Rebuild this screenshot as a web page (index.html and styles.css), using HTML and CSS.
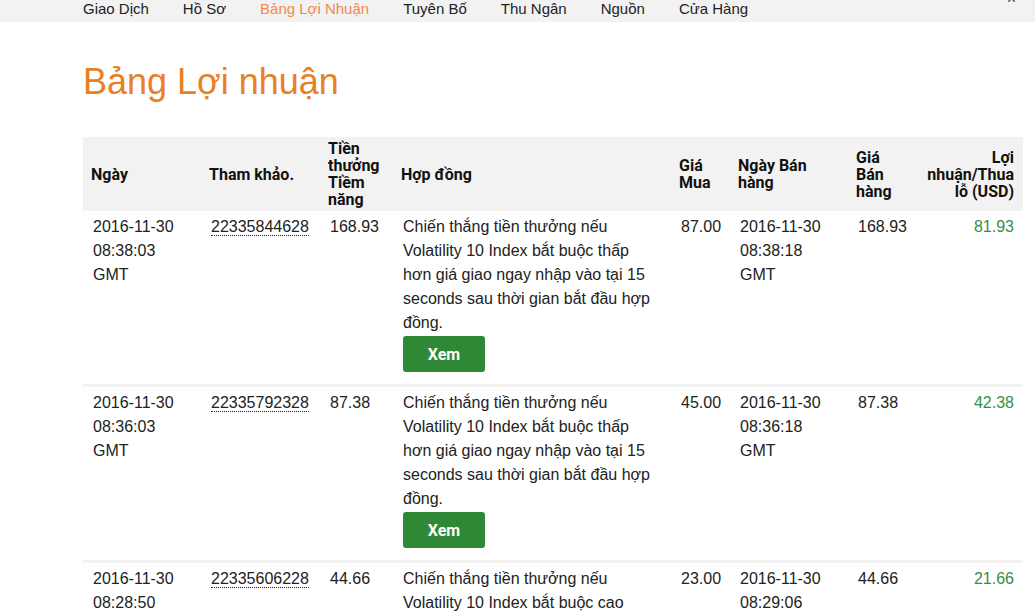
FILE: index.html
```html
<!DOCTYPE html>
<html lang="vi">
<head>
    <meta charset="UTF-8">
    <meta name="viewport" content="width=device-width, initial-scale=1.0">
    <title>Bảng Lợi nhuận</title>
    <link rel="stylesheet" href="styles.css">
</head>
<body>
    <nav class="menu">
        <a href="#">Giao Dịch</a>
        <a href="#">Hồ Sơ</a>
        <a href="#" class="active">Bảng Lợi Nhuận</a>
        <a href="#">Tuyên Bố</a>
        <a href="#">Thu Ngân</a>
        <a href="#">Nguồn</a>
        <a href="#">Cửa Hàng</a>
        <span class="close">&times;</span>
    </nav>

    <div class="content">
        <h1>Bảng Lợi nhuận</h1>

        <table class="profit-table">
            <colgroup>
                <col style="width:118px">
                <col style="width:119px">
                <col style="width:73px">
                <col style="width:278px">
                <col style="width:59px">
                <col style="width:118px">
                <col style="width:66px">
                <col>
            </colgroup>
            <thead>
                <tr>
                    <th>Ngày</th>
                    <th>Tham khảo.</th>
                    <th>Tiền thưởng Tiềm năng</th>
                    <th>Hợp đồng</th>
                    <th>Giá Mua</th>
                    <th>Ngày Bán hàng</th>
                    <th>Giá Bán hàng</th>
                    <th class="num">Lợi nhuận/Thua lỗ (USD)</th>
                </tr>
            </thead>
            <tbody>
                <tr>
                    <td>2016-11-30 08:38:03 GMT</td>
                    <td><span class="ref">22335844628</span></td>
                    <td>168.93</td>
                    <td class="desc">
                        Chiến thắng tiền thưởng nếu Volatility 10 Index bắt buộc thấp hơn giá giao ngay nhập vào tại 15 seconds sau thời gian bắt đầu hợp đồng.
                        <button class="view-button">Xem</button>
                    </td>
                    <td>87.00</td>
                    <td>2016-11-30 08:38:18 GMT</td>
                    <td>168.93</td>
                    <td class="num profit">81.93</td>
                </tr>
                <tr>
                    <td>2016-11-30 08:36:03 GMT</td>
                    <td><span class="ref">22335792328</span></td>
                    <td>87.38</td>
                    <td class="desc">
                        Chiến thắng tiền thưởng nếu Volatility 10 Index bắt buộc thấp hơn giá giao ngay nhập vào tại 15 seconds sau thời gian bắt đầu hợp đồng.
                        <button class="view-button">Xem</button>
                    </td>
                    <td>45.00</td>
                    <td>2016-11-30 08:36:18 GMT</td>
                    <td>87.38</td>
                    <td class="num profit">42.38</td>
                </tr>
                <tr>
                    <td>2016-11-30 08:28:50 GMT</td>
                    <td><span class="ref">22335606228</span></td>
                    <td>44.66</td>
                    <td class="desc">
                        Chiến thắng tiền thưởng nếu Volatility 10 Index bắt buộc cao hơn giá giao ngay nhập vào tại 15 seconds sau thời gian bắt đầu hợp đồng.
                        <button class="view-button">Xem</button>
                    </td>
                    <td>23.00</td>
                    <td>2016-11-30 08:29:06 GMT</td>
                    <td>44.66</td>
                    <td class="num profit">21.66</td>
                </tr>
            </tbody>
        </table>
    </div>
</body>
</html>
```

FILE: styles.css
```css
body {
    margin: 0;
    font-family: "Liberation Sans", Arial, sans-serif;
    color: #222;
    background-color: #fff;
}
.menu {
    position: relative;
    display: flex;
    gap: 34px;
    height: 22px;
    padding-left: 83px;
    background-color: #f2f2f2;
    font-size: 15px;
    line-height: 18px;
}
.menu a {
    color: #222;
    text-decoration: none;
}
.menu a.active {
    color: #f2884b;
}
.close {
    position: absolute;
    right: 19px;
    top: -10px;
    font-size: 16px;
    color: #444;
}
.content {
    padding: 0 12px 0 83px;
}
h1 {
    margin: 39px 0 35px;
    font-size: 36px;
    font-weight: normal;
    line-height: 41px;
    color: #e98024;
}
.profit-table {
    width: 940px;
    table-layout: fixed;
    border-collapse: collapse;
}
.profit-table th {
    background-color: #f2f2f2;
    font-family: Roboto, "Liberation Sans", sans-serif;
    font-size: 16px;
    font-weight: bold;
    line-height: 17px;
    color: #111;
    text-align: left;
    vertical-align: middle;
    padding: 3px 6px 3px 8px;
}
.profit-table td {
    font-size: 16px;
    line-height: 24px;
    vertical-align: top;
    padding: 4px 6px 12px 10px;
}
.profit-table td.desc {
    padding-right: 17px;
}
.profit-table tbody tr {
    border-bottom: 3px solid #f2f2f2;
}
.profit-table .num {
    text-align: right;
    padding-right: 9px;
}
.profit {
    color: #3a8e43;
}
.ref {
    border-bottom: 1px dotted #222;
}
.view-button {
    display: block;
    width: 82px;
    height: 36px;
    margin-top: 1px;
    border: none;
    border-radius: 3px;
    background-color: #2e8836;
    color: #fff;
    font-family: Roboto, "Liberation Sans", sans-serif;
    font-size: 16px;
    font-weight: bold;
    cursor: pointer;
}
```
